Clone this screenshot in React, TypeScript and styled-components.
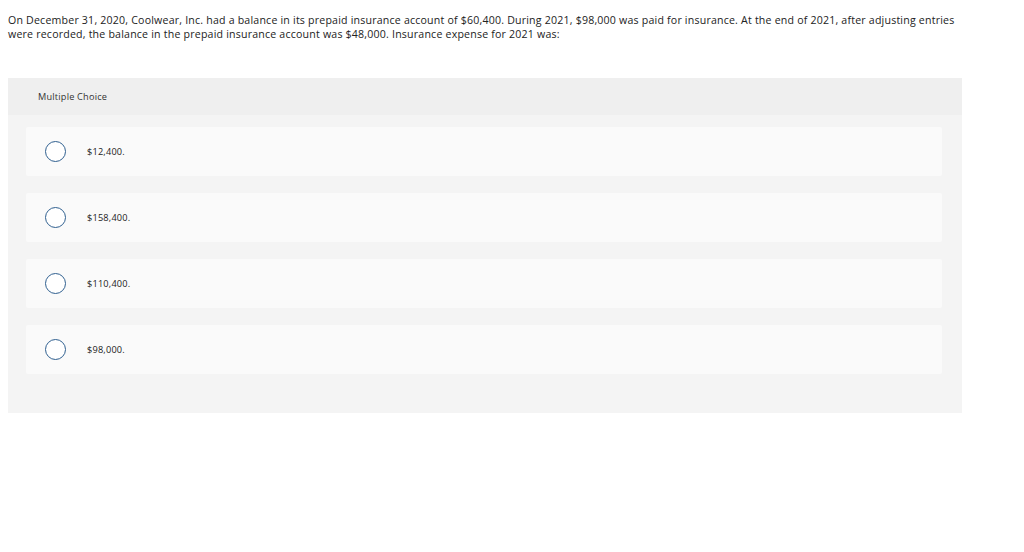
import React from 'react';
import styled, { createGlobalStyle } from 'styled-components';

const GlobalStyle = createGlobalStyle`
  body {
    margin: 0;
    background: #ffffff;
    font-family: 'Open Sans', 'Lato', sans-serif;
    color: #222222;
  }
`;

const Page = styled.main`
  padding: 13px 8px 0 8px;
  width: 970px;
  box-sizing: border-box;
`;

const Question = styled.p`
  margin: 0;
  width: 960px;
  font-size: 10.6px;
  line-height: 14px;
  letter-spacing: 0.2px;
  color: #222;
`;

const Panel = styled.section`
  margin-top: 37px;
  background: #f4f4f4;
  padding-bottom: 39px;
`;

const PanelHeader = styled.header`
  height: 37px;
  background: #efefef;
  display: flex;
  align-items: center;
  padding-left: 30px;
  font-size: 9.2px;
  letter-spacing: 0.2px;
  color: #333;
`;

const OptionList = styled.div`
  display: flex;
  flex-direction: column;
  gap: 17px;
  padding: 12px 20px 0 18px;
`;

const Option = styled.label`
  height: 49px;
  background: #fafafa;
  border-radius: 2px;
  display: flex;
  align-items: center;
  padding-left: 19px;
  cursor: pointer;
`;

const Radio = styled.span`
  width: 19px;
  height: 19px;
  border: 1.2px solid #2f5f8f;
  border-radius: 50%;
  background: #fff;
  flex-shrink: 0;
`;

const OptionText = styled.span`
  margin-left: 21px;
  font-size: 9.2px;
  letter-spacing: 0.2px;
  color: #222;
`;

const choices = ['$12,400.', '$158,400.', '$110,400.', '$98,000.'];

export default function App() {
  return (
    <>
      <GlobalStyle />
      <Page>
        <Question>
          On December 31, 2020, Coolwear, Inc. had a balance in its prepaid insurance account of $60,400. During 2021,
          $98,000 was paid for insurance. At the end of 2021, after adjusting entries were recorded, the balance in the
          prepaid insurance account was $48,000. Insurance expense for 2021 was:
        </Question>
        <Panel>
          <PanelHeader>Multiple Choice</PanelHeader>
          <OptionList>
            {choices.map((c) => (
              <Option key={c}>
                <Radio />
                <OptionText>{c}</OptionText>
              </Option>
            ))}
          </OptionList>
        </Panel>
      </Page>
    </>
  );
}
